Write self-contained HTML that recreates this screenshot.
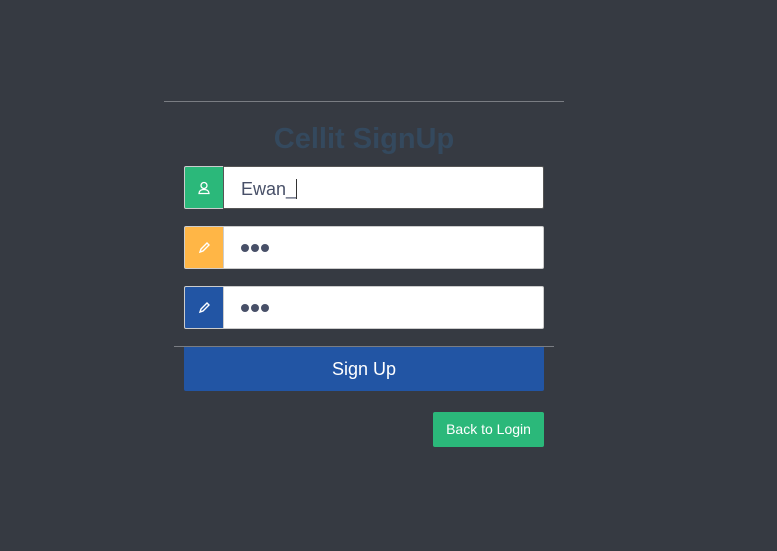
<!DOCTYPE html>
<html><head><style>
body{margin:0;width:777px;height:551px;background:#363a42;font-family:"Liberation Sans",sans-serif;position:relative;overflow:hidden}
.hr{position:absolute;height:1px;background:#7a7d83}
h1{position:absolute;left:164px;width:400px;top:122px;margin:0;text-align:center;font-size:29px;font-weight:bold;color:#34495e;line-height:34px}
.row{position:absolute;left:184px;width:360px;height:43px}
.ic{position:absolute;left:0;top:0;width:40px;height:43px;border:1px solid #ccc;box-sizing:border-box;border-radius:2px 0 0 2px}
.in{position:absolute;left:39px;right:0;top:0;height:43px;background:#fff;border:1px solid #ccc;box-sizing:border-box;border-radius:0 2px 2px 0}
.in span{position:absolute;left:17px;top:12px;font-size:18px;color:#485068}
.dots{position:absolute;left:17px;top:17px}
.dots i{display:inline-block;width:8px;height:8px;border-radius:50%;background:#485068;margin-right:2px;vertical-align:top}
.ic svg{position:absolute;left:12px;top:14px}
</style></head><body>
<div class="hr" style="left:164px;width:400px;top:101px"></div>
<h1>Cellit SignUp</h1>
<div class="row" style="top:166px"><div class="ic" style="background:#2bb87a"><svg width="14" height="14" viewBox="0 0 14 14" fill="none" stroke="#fff" stroke-width="1.3"><circle cx="7" cy="4.5" r="3"/><path d="M7 8.5C3.5 8.5 2 10.5 2 12.5h10C12 10.5 10.5 8.5 7 8.5"/></svg></div><div class="in" style="border-color:#555"><span>Ewan_<span style="position:static;border-left:1px solid #333;margin-left:0"></span></span></div></div>
<div class="row" style="top:226px"><div class="ic" style="background:#ffb646"><svg width="14" height="14" viewBox="0 0 14 14" fill="none" stroke="#fff" stroke-width="1.4"><path d="M3 11l1-3 6-6 2 2-6 6z"/></svg></div><div class="in"><div class="dots"><i></i><i></i><i></i></div></div></div>
<div class="row" style="top:286px"><div class="ic" style="background:#2255a4"><svg width="14" height="14" viewBox="0 0 14 14" fill="none" stroke="#fff" stroke-width="1.4"><path d="M3 11l1-3 6-6 2 2-6 6z"/></svg></div><div class="in"><div class="dots"><i></i><i></i><i></i></div></div></div>
<div class="hr" style="left:174px;width:380px;top:346px"></div>
<div style="position:absolute;left:184px;top:347px;width:360px;height:44px;background:#2255a4;border-radius:0 0 2px 2px;color:#fff;font-size:18px;text-align:center;line-height:44px">Sign Up</div>
<div style="position:absolute;left:433px;top:412px;width:111px;height:35px;background:#2bb87a;border-radius:2px;color:#fff;font-size:14px;text-align:center;line-height:35px">Back to Login</div>
</body></html>
